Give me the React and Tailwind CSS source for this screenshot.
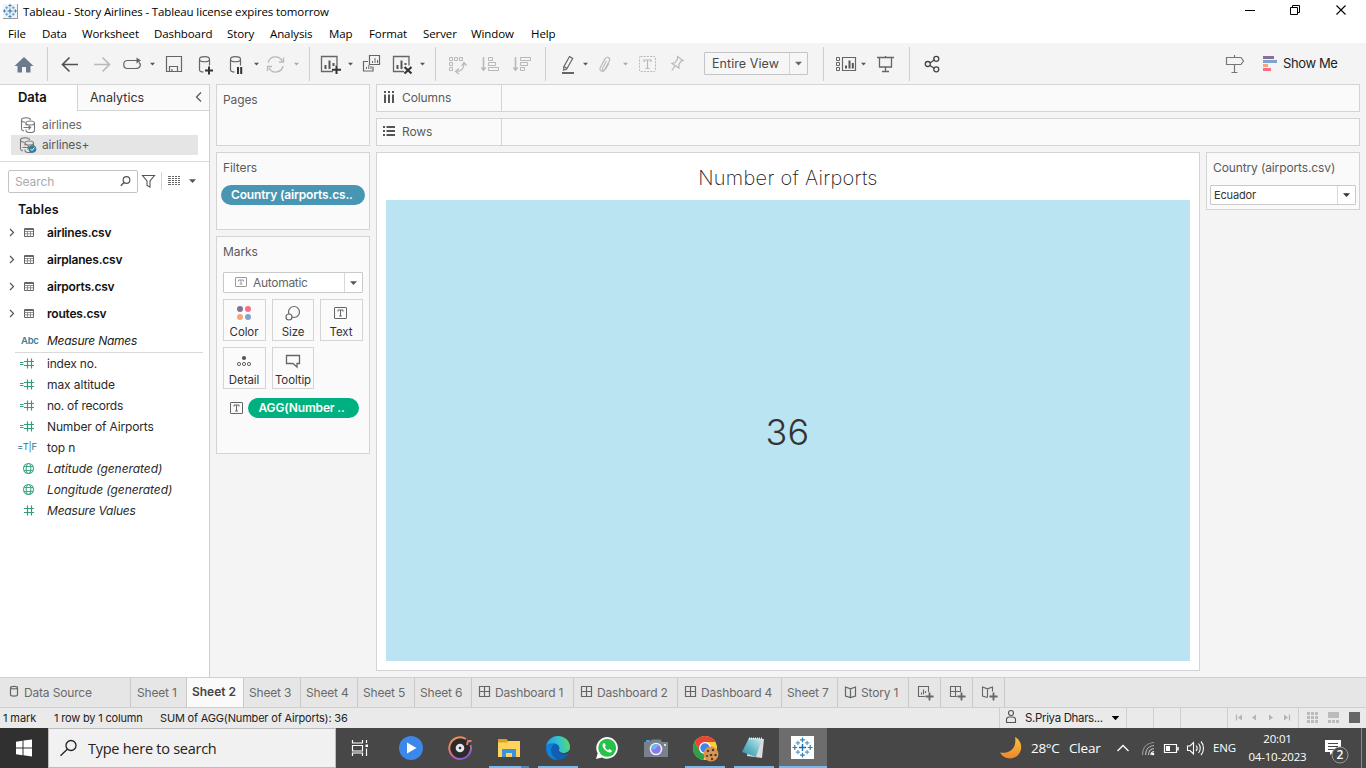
import React from "react";

const UI = "font-['Inter','Roboto',sans-serif]";
const WIN = "font-['Open_Sans','Noto_Sans',sans-serif]";

/* Icons are drawn in window coordinates: (x, y) is the cell's corner in the window. */
function Ico({ x, y, w, h, children }) {
  return (
    <svg className="block shrink-0" width={w} height={h} viewBox={`${x} ${y} ${w} ${h}`} fill="none">
      {children}
    </svg>
  );
}

const Caret = ({ x, y = 64, r = 2.5, c = "#555" }) => (
  <path d={`M${x - r} ${y - r / 2}h${2 * r}l${-r} ${r + 0.3}z`} fill={c} />
);

const Sep = () => <div className="my-[3px] w-px shrink-0 bg-[#cfcfcf]" />;

const TIcon = ({ x, y, w = 13, h = 11, c = "#666" }) => (
  <g>
    <rect x={x + 0.5} y={y + 0.5} width={w - 1} height={h - 1} stroke={c} rx="0.5" />
    <path
      d={`M${x + w / 2 - 2.5} ${y + 4.5}v-1.5h5v1.5M${x + w / 2} ${y + 3}v${h - 6}M${x + w / 2 - 1.4} ${y + h - 3}h2.8`}
      stroke={c}
    />
  </g>
);

function TableauMark({ x, y, s }) {
  const plus = (cx, cy, r, c, k) => (
    <path key={`${cx},${cy}`} d={`M${cx - r} ${cy}h${2 * r}M${cx} ${cy - r}v${2 * r}`} stroke={c} strokeWidth={k} />
  );
  return (
    <g transform={`translate(${x} ${y}) scale(${s})`}>
      {plus(0, 0, 3.2, "#1f6ea6", 1.3)}
      {plus(0, -7, 2.2, "#2d7fb3", 1.1)}
      {plus(0, 7, 2.2, "#2d7fb3", 1.1)}
      {plus(-7, 0, 2.2, "#2d7fb3", 1.1)}
      {plus(7, 0, 2.2, "#2d7fb3", 1.1)}
      {plus(-4.2, -4.2, 2, "#5a9cc5", 1.1)}
      {plus(4.2, -4.2, 2, "#5a9cc5", 1.1)}
      {plus(-4.2, 4.2, 2, "#5a9cc5", 1.1)}
      {plus(4.2, 4.2, 2, "#5a9cc5", 1.1)}
    </g>
  );
}

function TitleBar() {
  return (
    <div className={`flex h-[24px] items-start bg-white text-black ${WIN}`}>
      <Ico x={0} y={0} w={23} h={24}>
        <rect x="3" y="4" width="15" height="15" fill="#f2f5f7" />
        <path d="M3 18.5h14.5V4" stroke="#999" />
        <TableauMark x={10} y={11} s={0.78} />
      </Ico>
      <div className="pt-[4px] text-[11.5px] leading-[16px] tracking-[-0.13px]">
        Tableau - Story Airlines - Tableau license expires tomorrow
      </div>
      <div className="grow" />
      <Ico x={1236} y={0} w={130} h={24}>
        <path d="M1245 10.5h10" stroke="#000" />
        <path d="M1290.5 7.5h7v7h-7zM1292.5 7.5v-2h7v7h-2" stroke="#000" />
        <path d="M1336.5 5.5l9 9M1345.5 5.5l-9 9" stroke="#000" strokeWidth="1.1" />
      </Ico>
    </div>
  );
}

const MENUS = [
  ["File", "w-[34px]"],
  ["Data", "w-[40px]"],
  ["Worksheet", "w-[72px]"],
  ["Dashboard", "w-[73px]"],
  ["Story", "w-[43px]"],
  ["Analysis", "w-[59px]"],
  ["Map", "w-[40px]"],
  ["Format", "w-[54px]"],
  ["Server", "w-[48px]"],
  ["Window", "w-[60px]"],
  ["Help", "w-[40px]"],
];

function MenuBar() {
  return (
    <div className={`flex h-[19px] bg-white pl-[8px] text-[11.5px] leading-[19px] tracking-[-0.1px] text-black ${WIN}`}>
      {MENUS.map(([t, w]) => (
        <div key={t} className={w}>{t}</div>
      ))}
    </div>
  );
}

const Cyl = ({ x }) => (
  <path
    d={`M${x} 59.2c0-3.4 10-3.4 10 0c0 3.4-10 3.4-10 0v10.5c0 1.5 2 2.2 4 2.3M${x + 10} 59.2v6.3`}
    stroke="#666"
    strokeWidth="1.2"
  />
);

function Toolbar() {
  const g = "#666";
  const l = "#b8b8b8";
  return (
    <div className={`flex h-[41px] bg-[#f4f4f4] pt-px ${UI}`}>
      <Ico x={0} y={44} w={47} h={40}>
        <path d="M24 57l9.5 9H30.500v6.500h-4.500v-5.500h-4v5.500h-4.500V66H14.500z" fill="#6b7a8d" />
      </Ico>
      <Sep />
      <Ico x={48} y={44} w={261} h={40}>
        <path d="M62.500 64.500H78M69.500 57.500l-7 7l7 7" stroke="#505050" strokeWidth="1.6" />
        <path d="M94 64.500h15.500M102.500 57.500l7 7l-7 7" stroke="#b8b8b8" strokeWidth="1.6" />
        <path d="M134 60.500h-6.500c-5 0-5 8 0 8h8c5 0 6-4 3.500-6M130 60.500h9" stroke="#666" strokeWidth="1.2" />
        <path d="M136.500 57.500l4.500 3l-4.500 3z" fill="#666" />
        <Caret x={152.500} />
        <path d="M166.500 56.500h15v15h-15zM169.500 71.500v-5h8v5M172 69v2.500" stroke={g} strokeWidth="1.2" />
        <Cyl x={199.500} />
        <path d="M205 70.500h8M209 66.500v8" stroke="#333" strokeWidth="2" />
        <Cyl x={230.500} />
        <path d="M238 67v7M241.200 67v7" stroke="#333" strokeWidth="2" />
        <Caret x={256.500} />
        <path d="M268.200 62.500a7.500 7.500 0 0 1 14-1.500M283 66a7.500 7.500 0 0 1-14 2M283.500 57.500v4.500h-4.500M267.500 71v-4.500h4.500" stroke={l} strokeWidth="1.300" />
        <Caret x={296.500} c="#aaa" />
      </Ico>
      <Sep />
      <Ico x={310} y={44} w={125} h={40}>
        <path d="M333 71.500h-11.500v-15h15.500v9" stroke={g} strokeWidth="1.3" />
        <path d="M325.500 69v-4M329.500 69v-8.500M333.500 66v-3" stroke="#555" strokeWidth="2" />
        <path d="M332 69.800h9M336.500 65.500v8.500" stroke="#333" strokeWidth="2" />
        <Caret x={350.500} />
        <path d="M369.500 55.500h10v9h-10zM368 61.500h-4.500v9.500h9.500v-4.500" stroke={g} strokeWidth="1.200" />
        <path d="M372.500 63v-2M375 63v-5M377.500 63v-3M366.500 69v-2M368.800 69v-4M371 69v-3" stroke={g} />
        <path d="M404 71.500h-10.500v-15h15.500v9" stroke={g} strokeWidth="1.3" />
        <path d="M397.500 69v-4M401.500 69v-8.500M405.500 65v-2" stroke="#555" strokeWidth="2" />
        <path d="M404.500 67l7 6.500M411.500 67l-7 6.500" stroke="#333" strokeWidth="2.2" />
        <Caret x={422.500} />
      </Ico>
      <Sep />
      <Ico x={436} y={44} w={109} h={40}>
        <path d="M449.500 57.500h3v3h-3zM454.500 57.500h3v3h-3zM459.500 57.500h3v3h-3zM449.500 62.500h3v3h-3zM449.500 67.500h3v3h-3z" stroke={l} />
        <path d="M456 71.500c5 0 8-3 8-8M459 68.500l-3.500 3l3.500 2.500M461.500 66l2.500-3.500l2.500 3" stroke={l} strokeWidth="1.200" />
        <path d="M483.500 57v12" stroke={l} strokeWidth="1.500" />
        <path d="M480.500 67.500h6l-3 4z" fill={l} />
        <path d="M488.500 57.500h4v3h-4zM488.500 62.500h7v3h-7zM488.500 67.500h10v3h-10z" stroke={l} />
        <path d="M515.500 57v12" stroke={l} strokeWidth="1.500" />
        <path d="M512.500 67.500h6l-3 4z" fill={l} />
        <path d="M520.500 57.500h10v3h-10zM520.500 62.500h7v3h-7zM520.500 67.500h4v3h-4z" stroke={l} />
      </Ico>
      <Sep />
      <Ico x={546} y={44} w={158} h={40}>
        <path d="M569.500 56.500l3.200 2l-6 10.500l-3 1.200l0-3.200zM564 66.500l3 2" stroke={g} strokeWidth="1.200" />
        <path d="M562 73h12" stroke="#666" strokeWidth="2" />
        <Caret x={585.500} />
        <path d="M606.500 61l-4 7c-1 2 1 3 2.200 1.200l4.500-8c1.800-3.500-2.200-5.500-4.200-2.300l-4.500 8c-2.200 4.200 2.800 6.200 5 2.200l3.500-6" stroke={l} strokeWidth="1.100" />
        <Caret x={625.500} c="#aaa" />
        <rect x="639.500" y="56.500" width="16" height="15" stroke={l} strokeDasharray="2 1.200" rx="1" />
        <path d="M644 62v-2h7v2M647.500 60v8.500M645.500 68.500h4" stroke={l} strokeWidth="1.200" />
        <path d="M677.500 56.500l5.500 4l-2 .6l-2.200 3.600l.2 3.300l-7-4.500l3-1l2.500-3.500zM674.800 66l-3 4.500" stroke={l} strokeWidth="1.200" />
      </Ico>
      <div className="mt-[8px] flex h-[23px] w-[104px] shrink-0 rounded-[1px] border border-[#c4c4c4] bg-[#f6f6f6] text-[12.5px] leading-[21px] tracking-[0.06px] text-[#4a4a4a]">
        <div className="w-[85px] border-r border-[#d4d4d4] pl-[7px]">Entire View</div>
        <Ico x={790} y={53} w={17} h={21}>
          <Caret x={798.500} r={3.500} y={63.500} c="#666" />
        </Ico>
      </div>
      <div className="w-[15px] shrink-0" />
      <Sep />
      <Ico x={824} y={44} w={85} h={40}>
        <path d="M836.500 57.500h3v3h-3zM836.500 62.500h3v3h-3zM836.500 67.500h3v3h-3z" stroke={g} />
        <path d="M842.500 57.500h13v13h-13z" stroke={g} strokeWidth="1.200" />
        <path d="M846 68.500v-3M849.500 68.500v-8M852.800 68.500v-5.500" stroke="#555" strokeWidth="2" />
        <Caret x={863.500} />
        <path d="M877 57.500h17M879.500 57.500v9.500h12v-9.500M885.500 56v1.500M885.500 67v4M882 71.500h7" stroke={g} strokeWidth="1.300" />
      </Ico>
      <Sep />
      <Ico x={910} y={44} w={50} h={40}>
        <path d="M930 63l4.500-3.300M930 65.500l4.500 3" stroke="#444" strokeWidth="1.300" />
        <circle cx="927.800" cy="64" r="2.500" stroke="#444" strokeWidth="1.300" />
        <circle cx="936.300" cy="58.800" r="2.500" stroke="#444" strokeWidth="1.300" />
        <circle cx="936.300" cy="69.300" r="2.500" stroke="#444" strokeWidth="1.300" />
      </Ico>
      <div className="grow" />
      <Ico x={1220} y={44} w={63} h={40}>
        <path d="M1226.500 57.500h14.500l2.500 3.500l-2.500 3.500h-14.500zM1234.500 55v2.500M1234.500 64.500v7.500M1231.500 72.500h6" stroke="#777" strokeWidth="1.200" />
        <path d="M1263 57.500h11" stroke="#85719b" strokeWidth="3" />
        <path d="M1263 61.500h14" stroke="#7fa3cd" strokeWidth="3" />
        <path d="M1263 65.500h5" stroke="#f5a57c" strokeWidth="3" />
        <path d="M1263 69.500h8" stroke="#fa6e82" strokeWidth="3" />
      </Ico>
      <div className="w-[83px] text-[13px] leading-[38px] tracking-[-0.4px] text-[#222]">Show Me</div>
    </div>
  );
}

const DbPair = ({ y }) => (
  <g stroke="#777" strokeWidth="1.1">
    <path d={`M21.500 ${y - 5}c0-3 9-3 9 0M21.500 ${y - 5}c0 1.800 3 2.200 4 2.200M21.500 ${y - 5}v9c0 1 .8 1.600 2.500 2`} />
    <path d={`M26 ${y - 2}c0-2.700 8.500-2.700 8.500 0c0 2.700-8.500 2.700-8.500 0v2.500M34.500 ${y - 2}v7.500c0 2.700-8.500 2.700-8.500 0v-1`} />
    <path d={`M23.500 ${y + 2.500}h7M28.500 ${y + 0.500}l2.200 2l-2.200 2`} />
  </g>
);

const TABLES = ["airlines.csv", "airplanes.csv", "airports.csv", "routes.csv"];

const HASH = "#2f9e7a";
function FieldIcon({ kind }) {
  if (kind === "abc")
    return <div className="w-[47px] pl-[21px] text-[9.5px] font-semibold text-[#3f7d96]">Abc</div>;
  if (kind === "tf")
    return <div className="w-[47px] pl-[17px] text-[9.5px] tracking-[-0.2px] text-[#2f7590]">=T|F</div>;
  return (
    <Ico x={0} y={0} w={47} h={21}>
      {kind === "globe" ? (
        <g stroke="#45ab86" strokeWidth="1.1">
          <circle cx="28.500" cy="10.500" r="5" />
          <ellipse cx="28.500" cy="10.500" rx="2.300" ry="5" />
          <path d="M24 8.500h9M24 12.500h9" />
        </g>
      ) : (
        <g stroke={HASH} strokeWidth="1.200">
          <path d="M24 8.500h10M24 12.500h10M27.500 5.500v10M31.500 5.500v10" />
          {kind === "calc" && <path d="M20 9.500h3.500M20 11.500h3.500" />}
        </g>
      )}
    </Ico>
  );
}

const FIELDS = [
  ["calc", "index no.", "tracking-[-0.2px]"],
  ["calc", "max altitude", "tracking-[-0.1px]"],
  ["calc", "no. of records", "tracking-[-0.25px]"],
  ["calc", "Number of Airports", "tracking-[-0.14px]"],
  ["tf", "top n", "tracking-[-0.1px]"],
  ["globe", "Latitude (generated)", "italic tracking-[-0.05px]"],
  ["globe", "Longitude (generated)", "italic tracking-[-0.07px]"],
  ["hash", "Measure Values", "italic tracking-[-0.2px]"],
];

function DataPane() {
  return (
    <div className={`flex w-[210px] shrink-0 flex-col border-r border-[#cfcfcf] bg-white ${UI}`}>
      <div className="flex h-[27px] shrink-0 border-t border-[#d4d4d4]">
        <div className="w-[77px] pl-[18px] text-[13px] leading-[25px] font-semibold tracking-[-0.05px] text-[#111]">Data</div>
        <div className="flex grow border-b border-l border-[#d4d4d4] bg-[#fafafa]">
          <div className="grow pl-[12px] text-[12.5px] leading-[25px] text-[#333]">Analytics</div>
          <Ico x={190} y={85} w={19} h={25}>
            <path d="M201 92.500l-4.500 4.500l4.500 4.500" stroke="#555" strokeWidth="1.200" />
          </Ico>
        </div>
      </div>
      <div className="mt-[4px] flex h-[20px] items-center text-[12px] tracking-[-0.1px] text-[#666]">
        <Ico x={0} y={115} w={42} h={20}><DbPair y={125} /></Ico>
        airlines
      </div>
      <div className="mr-[11px] ml-[11px] flex h-[20px] items-center bg-[#e5e5e5] text-[12px] tracking-[-0.15px] text-[#5a5a5a]">
        <Ico x={11} y={135} w={31} h={20}>
          <g transform="translate(-1 0)"><DbPair y={145} /></g>
          <circle cx="32.500" cy="149" r="3.800" fill="#2f7f9f" />
          <path d="M30.500 149l1.500 1.500l2.500-3" stroke="#fff" />
        </Ico>
        airlines+
      </div>
      <div className="mt-[6px] h-px bg-[#d9d9d9]" />
      <div className="mt-[8px] flex h-[23px] pl-[8px]">
        <div className="flex w-[130px] rounded-[2px] border border-[#c4c4c4] pl-[6px] text-[12px] leading-[22px] tracking-[-0.1px] text-[#aaa]">
          <div className="grow">Search</div>
          <Ico x={115} y={171} w={22} h={21}>
            <circle cx="126.500" cy="180" r="3.300" stroke="#555" strokeWidth="1.200" />
            <path d="M124 182.500l-3.200 3.200" stroke="#555" strokeWidth="1.400" />
          </Ico>
        </div>
        <Ico x={138} y={170} w={71} h={23}>
          <path d="M142.500 175.500h12l-4.500 5.500v6l-3-1.500v-4.500z" stroke="#555" strokeWidth="1.100" />
          <path d="M161.500 172v18" stroke="#d4d4d4" />
          {[176.5, 178.5, 180.5, 182.5, 184.5].map((ly) => (
            <path key={ly} d={`M168 ${ly}h3M172 ${ly}h2M175 ${ly}h2M178 ${ly}h2`} stroke="#666" />
          ))}
          <Caret x={192.500} r={3.500} y={181} c="#555" />
        </Ico>
      </div>
      <div className="mt-[7px] h-[19px] pl-[18px] text-[12.5px] leading-[19px] font-semibold tracking-[0.15px] text-[#111]">Tables</div>
      {TABLES.map((t) => (
        <div key={t} className="flex h-[27px] items-center text-[12px] font-semibold tracking-[-0.2px] text-[#111]">
          <Ico x={0} y={0} w={47} h={27}>
            <path d="M10 10l3.500 3.500l-3.500 3.500" stroke="#555" strokeWidth="1.200" />
            <path d="M24.500 9.500h9v8h-9z" stroke="#666" />
            <path d="M25 10.500h8" stroke="#666" />
            <path d="M25 12.500h8M25 14.800h8M27.500 12v5.500M30.500 12v5.500" stroke="#888" strokeWidth=".9" />
          </Ico>
          {t}
        </div>
      ))}
      <div className="ml-[15px] flex h-[26px] w-[188px] items-center border-b border-[#d9d9d9] text-[12px] text-[#222]">
        <div className="-ml-[15px] flex items-center pt-[3px] tracking-[-0.25px] italic">
          <div className="not-italic"><FieldIcon kind="abc" /></div>
          Measure Names
        </div>
      </div>
      {FIELDS.map(([k, t, cls]) => (
        <div key={t} className={`flex h-[21px] items-center text-[12px] text-[#2a2a2a] ${cls}`}>
          <FieldIcon kind={k} />
          {t}
        </div>
      ))}
    </div>
  );
}

const Card = ({ className, children }) => (
  <div className={`shrink-0 border border-[#d4d4d4] bg-[#fafafa] ${className}`}>{children}</div>
);

function MarkButton({ label, w, children, x, y }) {
  return (
    <div className={`${w} flex h-[42px] flex-col items-center border border-[#d4d4d4] bg-[#fbfbfb] text-[11.5px] leading-[14px] text-[#333]`}>
      <Ico x={x} y={y} w={40} h={25}>{children}</Ico>
      <div className="whitespace-nowrap tracking-[-0.1px]">{label}</div>
    </div>
  );
}

function Cards() {
  return (
    <div className="ml-[6px] flex w-[154px] shrink-0 flex-col gap-[6px] text-[12px] tracking-[-0.1px] text-[#5a5a5a]">
      <Card className="h-[62px] pt-[7px] pl-[6px] leading-[16px]">Pages</Card>
      <Card className="h-[78px] pt-[7px] leading-[16px]">
        <div className="pl-[6px]">Filters</div>
        <div className="mt-[9px] ml-[4px] h-[20px] w-[144px] rounded-full bg-[#4996b2] pl-[10px] text-[12px] leading-[20px] font-semibold tracking-[-0.15px] whitespace-nowrap text-white">
          Country (airports.cs..
        </div>
      </Card>
      <Card className="h-[218px] px-[6px] pt-[7px] leading-[16px]">
        <div>Marks</div>
        <div className="mt-[12px] flex h-[21px] rounded-[1px] border border-[#c9c9c9] bg-white text-[12px] leading-[20px] tracking-[-0.3px] text-[#666]">
          <Ico x={224} y={273} w={29} h={19}>
            <TIcon x={235} y={277} w={12} h={10} c="#999" />
          </Ico>
          <div className="w-[92px] border-r border-[#d9d9d9]">Automatic</div>
          <Ico x={345} y={273} w={17} h={19}>
            <Caret x={353.500} y={283} r={3.500} c="#555" />
          </Ico>
        </div>
        <div className="mt-[6px] flex gap-[6px]">
          <MarkButton label="Color" w="w-[43px] pr-px" x={224} y={300}>
            <circle cx="240" cy="309" r="3" fill="#85719b" />
            <circle cx="248" cy="309" r="3" fill="#fa6e82" />
            <circle cx="240" cy="317" r="3" fill="#f5a57c" />
            <circle cx="248" cy="317" r="3" fill="#7fa3cd" />
          </MarkButton>
          <MarkButton label="Size" w="w-[42px]" x={273} y={300}>
            <circle cx="294" cy="312" r="5.500" stroke="#666" strokeWidth="1.200" />
            <circle cx="289" cy="317" r="3" stroke="#666" strokeWidth="1.200" fill="#fbfbfb" />
          </MarkButton>
          <MarkButton label="Text" w="w-[43px] pr-px" x={321} y={300}>
            <TIcon x={334} y={307} w={13} h={12} />
          </MarkButton>
        </div>
        <div className="mt-[6px] flex gap-[6px]">
          <MarkButton label="Detail" w="w-[43px] pr-px" x={224} y={348}>
            <circle cx="244" cy="358" r="2.100" fill="#555" />
            <circle cx="239" cy="364" r="1.600" stroke="#666" />
            <circle cx="244" cy="364" r="1.600" stroke="#666" />
            <circle cx="249" cy="364" r="1.600" stroke="#666" />
          </MarkButton>
          <MarkButton label="Tooltip" w="w-[42px]" x={273} y={348}>
            <path d="M286.500 355.500h13v8h-2.500v3.500l-4-3.500h-6.500z" stroke="#666" strokeWidth="1.300" />
          </MarkButton>
        </div>
        <div className="mt-[9px] flex h-[20px]">
          <Ico x={223} y={398} w={25} h={20}>
            <TIcon x={230} y={402} w={13} h={12} />
          </Ico>
          <div className="w-[111px] rounded-full bg-[#00b180] pl-[10.5px] text-[12px] leading-[20px] font-semibold tracking-[-0.15px] whitespace-nowrap text-white">
            AGG(Number ..
          </div>
        </div>
      </Card>
    </div>
  );
}

function Workspace() {
  return (
    <div className="ml-[6px] flex grow flex-col gap-[6px] text-[12px] tracking-[-0.1px] text-[#5a5a5a]">
      <Card className="mr-[6px] flex h-[28px]">
        <div className="flex w-[125px] border-r border-[#d4d4d4] leading-[26px]">
          <Ico x={377} y={85} w={25} h={26}>
            <path d="M385 91v2M389 91v2M393 91v2M385 94.500v8.500M389 94.500v8.500M393 94.500v8.500" stroke="#555" strokeWidth="2" />
          </Ico>
          Columns
        </div>
      </Card>
      <Card className="mr-[6px] flex h-[28px]">
        <div className="flex w-[125px] border-r border-[#d4d4d4] leading-[26px]">
          <Ico x={377} y={119} w={25} h={26}>
            <path d="M383 127h2M383 131h2M383 135h2M386.500 127h8.500M386.500 131h8.500M386.500 135h8.500" stroke="#555" strokeWidth="2" />
          </Ico>
          Rows
        </div>
      </Card>
      <div className="flex gap-[6px]">
        <div className="flex h-[519px] w-[824px] flex-col border border-[#d4d4d4] bg-white px-[9px]">
          <div className="h-[47px] text-center text-[20px] leading-[50px] font-extralight tracking-[0.27px] text-[#222]">Number of Airports</div>
          <div className="flex h-[461px] items-center justify-center bg-[#bae4f2] text-[36px] font-light text-[#333]">
            <span className="mt-[3px] mr-px tracking-[0.2px]">36</span>
          </div>
        </div>
        <Card className="h-[58px] w-[154px] px-[3px]">
          <div className="h-[32px] pl-[3px] leading-[30px] tracking-[-0.12px] whitespace-nowrap">Country (airports.csv)</div>
          <div className="flex h-[20px] w-[146px] rounded-[1px] border border-[#c9c9c9] bg-white text-[11px] leading-[19px] tracking-[-0.15px] text-[#333]">
            <div className="w-[127px] border-r border-[#d9d9d9] pl-[3px]">Ecuador</div>
            <Ico x={1338} y={186} w={16} h={18}>
              <Caret x={1346.500} y={195} r={3.500} c="#333" />
            </Ico>
          </div>
        </Card>
      </div>
    </div>
  );
}

const GridIcon = () => (
  <Ico x={0} y={0} w={23} h={29}>
    <path d="M7.500 8.500h10v10h-10zM12.500 8.500v10M7.500 13.500h10" stroke="#666" strokeWidth="1.200" />
  </Ico>
);
const Book = ({ x }) => (
  <path d={`M${x} 9l5 1.800l5-1.800v9l-5 1.500l-5-1.500zM${x + 5} 10.800v8.500`} stroke="#666" strokeWidth="1.200" />
);

const TABS = [
  ["Sheet 1", "w-[56px] pl-[6px]"],
  ["Sheet 2", "w-[57px] pl-[5px]"],
  ["Sheet 3", "w-[57px] pl-[5px]"],
  ["Sheet 4", "w-[57px] pl-[5px]"],
  ["Sheet 5", "w-[57px] pl-[5px]"],
  ["Sheet 6", "w-[57px] pl-[5px]"],
  ["Dashboard 1", "w-[102px]"],
  ["Dashboard 2", "w-[104px]"],
  ["Dashboard 4", "w-[104px]"],
  ["Sheet 7", "w-[56px] pl-[5px]"],
];

function SheetTabs() {
  const cell = "flex shrink-0 border-r border-[#c9c9c9]";
  return (
    <div className={`flex h-[31px] border-y border-[#cfcfcf] bg-[#e6e6e6] text-[12px] leading-[29px] tracking-[-0.17px] whitespace-nowrap text-[#6a6a6a] ${UI}`}>
      <div className={`${cell} w-[131px]`}>
        <Ico x={0} y={0} w={24} h={29}>
          <path d="M10.500 9.800c0-1.800 7-1.800 7 0v7c0 1.800-7 1.800-7 0zc0 1.500 7 1.500 7 0" stroke="#666" strokeWidth="1.200" />
        </Ico>
        Data Source
      </div>
      {TABS.map(([t, w]) => (
        <div key={t} className={`${cell} ${w} ${t === "Sheet 2" ? "bg-[#fafafa] font-semibold leading-[27px] tracking-[-0.03px] text-[#444]" : ""}`}>
          {t.startsWith("Dash") && <GridIcon />}
          {t}
        </div>
      ))}
      <div className={`${cell} w-[71px]`}>
        <Ico x={0} y={0} w={23} h={29}><Book x={7.500} /></Ico>
        Story 1
      </div>
      <div className={`${cell} w-[32px]`}>
        <Ico x={0} y={0} w={31} h={29}>
          <path d="M16 18.500h-6.500v-10h10v5.500M12.500 16.500v-2M14.500 16.500v-5M16.500 15v-2" stroke="#666" strokeWidth="1.100" />
          <path d="M16.500 18.500h8M20.500 14.500v8" stroke="#666" strokeWidth="1.800" />
        </Ico>
      </div>
      <div className={`${cell} w-[32px]`}>
        <Ico x={0} y={0} w={31} h={29}>
          <path d="M16 18.500h-6.500v-10h10v5.500M14.500 8.500v10M9.500 13.500h10" stroke="#666" strokeWidth="1.100" />
          <path d="M16.500 18.500h8M20.500 14.500v8" stroke="#666" strokeWidth="1.800" />
        </Ico>
      </div>
      <div className={`${cell} w-[32px]`}>
        <Ico x={0} y={0} w={31} h={29}>
          <path d="M19.500 13.500v-4.500l-5 1.800l-5-1.800v9l5 1.500M14.500 10.800v8.500" stroke="#666" strokeWidth="1.100" />
          <path d="M16.500 18.500h8M20.500 14.500v8" stroke="#666" strokeWidth="1.800" />
        </Ico>
      </div>
    </div>
  );
}

function StatusBar() {
  const cell = "shrink-0 border-l border-[#cfcfcf]";
  return (
    <div className={`flex h-[20px] bg-[#eaeaea] text-[11px] leading-[20px] tracking-[-0.18px] whitespace-nowrap text-[#222] ${UI}`}>
      <div className="w-[54px] pl-[3px] tracking-[-0.1px]">1 mark</div>
      <div className="w-[106px]">1 row by 1 column</div>
      <div className="grow">SUM of AGG(Number of Airports): 36</div>
      <div className={`${cell} flex w-[127px]`}>
        <Ico x={1000} y={708} w={25} h={20}>
          <circle cx="1011" cy="713" r="2.500" stroke="#555" strokeWidth="1.100" />
          <path d="M1006.500 722.500v-3c0-2 1.500-2.500 3-2.500h3c1.500 0 3 .5 3 2.500v3z" stroke="#555" strokeWidth="1.100" />
        </Ico>
        <div className="w-[84px] text-[11.500px] tracking-[-0.35px]">S.Priya Dhars...</div>
        <Ico x={1109} y={708} w={17} h={20}><Caret x={1115.500} y={718} r={3.800} c="#000" /></Ico>
      </div>
      <div className={`${cell} w-[27px]`} />
      <div className={`${cell} w-[27px]`} />
      <div className={`${cell} w-[47px]`} />
      <div className={`${cell} w-[71px]`}>
        <Ico x={1228} y={708} w={70} h={20}>
          <path d="M1242 714.500v6l-4-3zM1256 714.500v6l-4-3zM1269 714.500v6l4-3zM1284 714.500v6l4-3z" fill="#b4b4b4" />
          <path d="M1236.500 714.500v6M1289.500 714.500v6" stroke="#b4b4b4" strokeWidth="1.200" />
        </Ico>
      </div>
      <div className={`${cell} w-[68px]`}>
        <Ico x={1299} y={708} w={67} h={20}>
          <path d="M1307 713.500h11M1307 717.500h11M1307 721.500h11" stroke="#bbb" strokeWidth="3" strokeDasharray="3 1" />
          <path d="M1328 715h11" stroke="#bbb" strokeWidth="6" />
          <path d="M1328 721.500h11" stroke="#bbb" strokeWidth="3" strokeDasharray="3 1" />
          <rect x="1349" y="712" width="11" height="11" fill="#666" />
        </Ico>
      </div>
    </div>
  );
}

function TaskCell({ x, w = "w-[49px]", bar, children }) {
  return (
    <div className={`${w} relative h-[40px] shrink-0`}>
      <Ico x={x} y={728} w={49} h={40}>{children}</Ico>
      {bar && <div className={`absolute bottom-0 h-[2px] bg-[#76b9ed] ${bar}`} />}
    </div>
  );
}

function Taskbar() {
  return (
    <div className={`flex h-[40px] bg-[#474747] whitespace-nowrap text-white ${WIN}`}>
      <div className="w-[48px] shrink-0 bg-[#303030]">
        <Ico x={0} y={728} w={48} h={40}>
          <path d="M16 741.800l6.500-1v6.700H16zM23.500 740.600l8.500-1.200v8.100h-8.500zM16 748.500h6.500v6.700l-6.500-1zM23.500 748.500h8.500v8l-8.500-1.200z" fill="#fff" />
        </Ico>
      </div>
      <div className="flex w-[288px] shrink-0 border border-[#bdbdbd] bg-[#f1f1f1] text-[14.5px] leading-[39px] tracking-[-0.26px] text-[#222]">
        <Ico x={49} y={729} w={39} h={38}>
          <circle cx="71" cy="745.500" r="5" stroke="#222" strokeWidth="1.300" />
          <path d="M67.300 749.200l-6.800 6.500" stroke="#222" strokeWidth="1.300" />
        </Ico>
        Type here to search
      </div>
      <TaskCell x={336}>
        <g stroke="#fff" strokeWidth="1.200">
          <path d="M352.500 740v3h10v-3M352.500 756v-3h10v3M352.500 745.500h10v5.500h-10z" />
          <path d="M366.500 740v3M366.500 748.500v7.500" />
        </g>
        <rect x="365.500" y="744.500" width="2.500" height="2.500" fill="#fff" />
      </TaskCell>
      <TaskCell x={385}>
        <circle cx="411" cy="748" r="12" fill="#3c87ea" />
        <path d="M407 742.500v11l9.500-5.500z" fill="#fff" />
      </TaskCell>
      <TaskCell x={434}>
        <defs>
          <linearGradient id="ring" x1="0" y1="0" x2="0.6" y2="1">
            <stop offset="0" stopColor="#ff9a3d" />
            <stop offset="0.55" stopColor="#e0707a" />
            <stop offset="1" stopColor="#8d5bd0" />
          </linearGradient>
        </defs>
        <circle cx="460" cy="748" r="10.500" fill="#2b2b2e" />
        <path d="M466 739a10.800 10.800 0 1 0 4.500 6" stroke="url(#ring)" strokeWidth="2" />
        <path d="M467 745l1-4l3.500 0" stroke="#e0806a" strokeWidth="2" />
        <circle cx="460" cy="748" r="4.300" fill="#e6e6e6" />
        <circle cx="460" cy="748" r="1.300" fill="#333" />
      </TaskCell>
      <TaskCell x={483} bar="left-[6px] w-[32px]">
        <path d="M498 739h8l2 2h12v16h-22z" fill="#ffd35c" />
        <path d="M498 739h8l2 2.500l-1.500 1H498z" fill="#dda11c" />
        <path d="M502 757v-8h14v8h-4v-4h-6v4z" fill="#3b93da" />
        <rect x="521" y="766" width="8" height="2" fill="#5287b3" />
      </TaskCell>
      <TaskCell x={532} bar="left-[6px] w-[40px]">
        <defs>
          <linearGradient id="edge" x1="0" y1="0.5" x2="1" y2="0.3">
            <stop offset="0" stopColor="#1a9be0" />
            <stop offset="0.5" stopColor="#2fc0d6" />
            <stop offset="1" stopColor="#5edb5f" />
          </linearGradient>
        </defs>
        <circle cx="558" cy="748" r="12" fill="#0f5fb4" />
        <path d="M546 747c1-7 6-11 12-11c7 0 12 5 12 11c0 4-3 6-7 6c-3 0-4.500-1.500-4-3c1-2 .5-6-5-6.500c-4-.2-7 1.500-8 3.500z" fill="url(#edge)" />
        <path d="M546 748c1.500-3 5-4.500 8.500-4c-4 2-4.500 8-1.500 12l4 4c-6 0-11-5-11-12z" fill="#1180d8" />
        <path d="M558.500 749c-1 3 2 5.500 5 5.500c2.500 0 4.500-.5 6.200-1.800l1-3c-2 2.500-5 3.300-7.700 3.300c-2.500 0-4.300-1.500-4.500-4z" fill="#474747" />
      </TaskCell>
      <TaskCell x={581}>
        <path d="M596 759l1.700-5.700a10.800 10.800 0 1 1 4.200 4.100z" fill="#fff" />
        <circle cx="607.200" cy="747.800" r="9" fill="#25c148" />
        <path d="M603.500 743.200c-2 1.800-.5 5 1.800 7c2.500 2.300 5.700 3.200 6.700.7l-2.500-1.900l-1.400 1.200c-1.500-.6-2.700-1.900-3.300-3.200l1-1.200l-1-2.600z" fill="#fff" />
      </TaskCell>
      <TaskCell x={630}>
        <path d="M644 742h6l1.500-2.500h9L662 742h6v15h-24z" fill="#79828c" />
        <path d="M646 740h4v2h-4z" fill="#36a3e8" />
        <circle cx="656" cy="749" r="6.300" fill="#f1f3f6" />
        <circle cx="656" cy="749" r="4.800" fill="#8a78ea" />
        <path d="M651.500 747.500a4.800 4.800 0 0 1 7.500-2.500l-5 5z" fill="#6bb7f2" />
        <rect x="664" y="744" width="2" height="2" fill="#dfe3e6" />
      </TaskCell>
      <TaskCell x={679} bar="left-[6px] w-[40px]">
        <circle cx="705" cy="748" r="12" fill="#ffcd3f" />
        <path d="M694.600 742a12 12 0 0 1 20.800 0H705z" fill="#e94435" />
        <path d="M694.600 742l5.200 9l5.200 3l-1.500 6a12 12 0 0 1-8.900-18z" fill="#2da04e" />
        <path d="M694.600 742l5.200 9l4-9z" fill="#e94435" />
        <circle cx="705" cy="748" r="6" fill="#fff" />
        <circle cx="705" cy="748" r="4.700" fill="#4285f0" />
        <circle cx="711" cy="754" r="7.500" fill="#d9954e" />
        <g fill="#54382a">
          <circle cx="708" cy="751" r="1.200" /><circle cx="713" cy="750" r="1.200" /><circle cx="715.500" cy="755" r="1.200" />
          <circle cx="711" cy="755" r="1.300" /><circle cx="707" cy="756" r="1.100" /><circle cx="712" cy="759" r="1.200" />
        </g>
        <path d="M709 753h1.500M713 753h1.500M709 758h1.500M714 757.500h1.500" stroke="#8fc3d8" />
      </TaskCell>
      <TaskCell x={728} bar="left-[6px] w-[40px]" w="w-[51px]">
        <defs>
          <linearGradient id="pad" x1="1" y1="0" x2="0" y2="1">
            <stop offset="0" stopColor="#cfeff0" />
            <stop offset="0.5" stopColor="#6cbccb" />
            <stop offset="1" stopColor="#2d8ba6" />
          </linearGradient>
        </defs>
        <path d="M749 738l15 1l-2 19l-15-2z" fill="#dcdcdc" />
        <path d="M749 738l13 1l-6 18l-14-5z" fill="url(#pad)" />
        <path d="M749 738.500h14" stroke="#eee" strokeDasharray="1 1" strokeWidth="2" />
      </TaskCell>
      <div className="relative h-[40px] w-[48px] shrink-0 bg-[#6d6d6d]">
        <Ico x={779} y={728} w={48} h={40}>
          <rect x="791" y="736" width="23" height="23" fill="#fff" />
          <TableauMark x={802.500} y={747.500} s={1.100} />
        </Ico>
        <div className="absolute bottom-0 left-0 h-[2px] w-[48px] bg-[#76b9ed]" />
      </div>
      <div className="grow" />
      <Ico x={995} y={728} w={36} h={40}>
        <defs>
          <linearGradient id="moon" x1="0" y1="0" x2="0" y2="1">
            <stop offset="0" stopColor="#f7c53c" />
            <stop offset="1" stopColor="#f0862c" />
          </linearGradient>
        </defs>
        <path d="M1015 737a11.300 11.300 0 1 1-15 15.500c7 1.500 13.500-2 15-8.500c.5-2.500.5-5 0-7z" fill="url(#moon)" />
      </Ico>
      <div className="w-[38px] text-[13.500px] leading-[41px] tracking-[-0.300px]">28°C</div>
      <div className="w-[44px] text-[13.500px] leading-[41px] tracking-[-0.200px]">Clear</div>
      <Ico x={1113} y={728} w={100} h={40}>
        <path d="M1117.500 751l5.500-5.500l5.500 5.500" stroke="#fff" strokeWidth="1.300" />
        <g stroke="#bbb" strokeWidth="1.200">
          <path d="M1142.500 755c0-7 4-12 11.500-12.500" opacity=".7" />
          <path d="M1145.500 755c0-5 3-9 8.500-9.500" />
          <path d="M1148.500 755c0-3.500 2-6 5.500-6.500" />
          <path d="M1151 755c0-2 1-3.300 3-3.500" stroke="#fff" />
        </g>
        <circle cx="1153" cy="754" r="1.300" fill="#fff" />
        <path d="M1164.500 744.500h12v8h-12z" stroke="#fff" strokeWidth="1.200" />
        <path d="M1178 747v3.500" stroke="#fff" strokeWidth="1.500" />
        <rect x="1166" y="746" width="4" height="5" fill="#fff" />
        <path d="M1187.500 746h2.500l3.500-3.500v11.500l-3.500-3.500h-2.500z" stroke="#fff" strokeWidth="1.100" />
        <path d="M1196 745.500c1.300 1.500 1.300 4 0 5.500M1198.500 743.500c2.300 2.500 2.300 7 0 9.500M1201 741.500c3.300 3.500 3.300 10 0 13.500" stroke="#fff" strokeWidth="1.100" />
      </Ico>
      <div className="w-[32px] text-[11.500px] leading-[40px] tracking-[-0.200px]">ENG</div>
      <div className="w-[65px] pt-[2px] text-center text-[11.500px] leading-[18px] tracking-[-0.200px]">
        <div>20:01</div>
        <div>04-10-2023</div>
      </div>
      <div className="relative w-[51px] shrink-0 pl-px">
        <Ico x={1311} y={728} w={50} h={40}>
          <path d="M1325 740h16v12h-8l-3 3v-3h-5z" fill="#fff" />
          <path d="M1328 743.500h10M1328 746.500h10M1328 749.500h6" stroke="#474747" />
          <circle cx="1340" cy="755" r="8" fill="#474747" stroke="#999" />
        </Ico>
        <div className="absolute top-[19px] left-[26.5px] text-[12px] leading-[16px] font-semibold">2</div>
      </div>
      <div className="w-[5px] shrink-0 border-l border-[#8a8a8a]" />
    </div>
  );
}

export default function App() {
  return (
    <div className="flex h-[768px] w-[1366px] flex-col overflow-hidden bg-[#f4f4f4]">
      <TitleBar />
      <MenuBar />
      <Toolbar />
      <div className={`flex h-[593px] shrink-0 ${UI}`}>
        <DataPane />
        <Cards />
        <Workspace />
      </div>
      <SheetTabs />
      <StatusBar />
      <Taskbar />
    </div>
  );
}
